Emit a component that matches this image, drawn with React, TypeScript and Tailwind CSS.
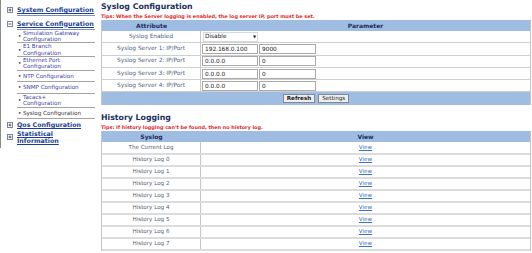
import React from 'react';

const FONT = "font-['DejaVu_Sans',Verdana,sans-serif]";

function Box({ open }: { open?: boolean }) {
  return (
    <span className="flex items-center justify-center w-[6px] h-[6px] border border-[#7d8896] bg-white shrink-0">
      <svg width="4" height="4" viewBox="0 0 4 4" className="block">
        <path d="M0.5 2h3" stroke="#2a3550" strokeWidth="0.8" />
        {!open && <path d="M2 0.5v3" stroke="#2a3550" strokeWidth="0.8" />}
      </svg>
    </span>
  );
}

function Heading({ label, open }: { label: React.ReactNode; open?: boolean }) {
  return (
    <div className="flex items-start gap-[4px] pl-[6px] pr-[3px]">
      <div className="flex pt-[3px]">
        <Box open={open} />
      </div>
      <div className="flex-1 border-b border-[#7f93b5] py-[2px] text-[6.3px] leading-[7px] font-bold text-[#1c3f94] underline">
        {label}
      </div>
    </div>
  );
}

const SUB: { l: React.ReactNode; sel?: boolean }[] = [
  { l: <>Simulation Gateway<br />Configuration</> },
  { l: <>E1 Branch<br />Configuration</> },
  { l: <>Ethernet Port<br />Configuration</> },
  { l: 'NTP Configuration' },
  { l: 'SNMP Configuration' },
  { l: <>Tacacs+<br />Configuration</> },
  { l: 'Syslog Configuration', sel: true },
];

function Sidebar() {
  return (
    <div className="w-[98px] shrink-0 border-l border-[#8c8c8c] pt-[4px] pb-[4px] self-start">
      <Heading label="System Configuration" />
      <div className="h-[1.5px]" />
      <Heading label="Service Configuration" open />
      <div className="pl-[16px] pr-[3px]">
        {SUB.map((s, i) => (
          <div
            key={i}
            className={`flex items-center min-h-[11.5px] border-b border-[#a3a3a3] py-[0.2px] text-[5.6px] leading-[6.2px] ${s.sel ? 'text-[#333333]' : 'text-[#3d3da6]'}`}
          >
            <span className="w-[6px] pl-[1px] text-[#333]">•</span>
            <span>{s.l}</span>
          </div>
        ))}
      </div>
      <div className="h-[2px]" />
      <div className="flex items-start gap-[4px] pl-[6px] pr-[3px]">
        <div className="flex pt-[1px]"><Box /></div>
        <div className="flex-1 text-[6.3px] leading-[7px] font-bold text-[#1c3f94] underline">Qos Configuration</div>
      </div>
      <div className="h-[1.5px]" />
      <div className="flex items-start gap-[4px] pl-[6px] pr-[3px]">
        <div className="flex pt-[4px]"><Box /></div>
        <div className="flex-1 text-[6.3px] leading-[7px] font-bold text-[#1c3f94] underline">
          Statistical<br />Information
        </div>
      </div>
    </div>
  );
}

function Input({ v, w }: { v: string; w: string }) {
  return (
    <div className={`${w} h-[10px] border border-[#a9a9a9] bg-white px-[2px] text-[5.8px] leading-[8px] text-[#222]`}>{v}</div>
  );
}

const SERVERS = [
  ['192.168.0.100', '9000'],
  ['0.0.0.0', '0'],
  ['0.0.0.0', '0'],
  ['0.0.0.0', '0'],
];

const LOGS = ['The Current Log', ...Array.from({ length: 8 }, (_, i) => `History Log ${i}`)];

export default function App() {
  return (
    <div className={`w-[532px] h-[253px] overflow-hidden bg-white flex gap-[3px] leading-none ${FONT}`}>
      <Sidebar />
      <main className="flex-1 pr-[1px]">
        <h1 className="text-[7.8px] leading-[12px] font-bold text-[#1b2f5e] pt-[1px]">Syslog Configuration</h1>
        <p className="text-[4.9px] leading-[6px] font-bold text-[#e3262c] h-[7px]">
          Tips: When the Server logging is enabled, the log server IP, port must be set.
        </p>
        <div className="border-x border-[#c6c6c6]">
          <div className="flex h-[11px] items-center bg-[#9fbde3] text-[6px] font-bold text-[#1b2f5e]">
            <div className="w-[99px] text-center">Attribute</div>
            <div className="flex-1 text-center">Parameter</div>
          </div>
          <div className="flex h-[12.3px] border-b border-[#cfcfcf] text-[5.8px]">
            <div className="w-[99px] border-r border-[#c6c6c6] flex items-center justify-center text-[#4f5f7d]">Syslog Enabled</div>
            <div className="flex-1 flex items-center pl-[2px]">
              <div className="w-[55px] h-[10px] border border-[#d8d8d8] flex items-center justify-between px-[1px] text-[#222]">
                <span>Disable</span>
                <span className="text-[4px]">▼</span>
              </div>
            </div>
          </div>
          {SERVERS.map(([ip, port], i) => (
            <div key={i} className="flex h-[12.3px] border-b border-[#cfcfcf] text-[5.8px]">
              <div className="w-[99px] border-r border-[#c6c6c6] flex items-center justify-center text-[#4f5f7d]">
                Syslog Server {i + 1}: IP/Port
              </div>
              <div className="flex-1 flex items-center gap-[1px] pl-[1px]">
                <Input v={ip} w="w-[56px]" />
                <Input v={port} w="w-[57px]" />
              </div>
            </div>
          ))}
          <div className="flex h-[13px] items-center justify-center gap-[3px] bg-[#9fbde3]">
            <button className="h-[9px] px-[3px] border border-[#7e8a99] bg-[#eeeeee] text-[5.6px] leading-[7px] text-[#222] font-bold">Refresh</button>
            <button className="h-[9px] px-[3px] border border-[#7e8a99] bg-[#eeeeee] text-[5.6px] leading-[7px] text-[#222]">Settings</button>
          </div>
        </div>

        <h2 className="text-[7.8px] leading-[12px] font-bold text-[#1b2f5e] pt-[7px]">History Logging</h2>
        <p className="text-[4.9px] leading-[6px] font-bold text-[#e3262c] h-[7px]">
          Tips: If history logging can't be found, then no history log.
        </p>
        <div className="border-x border-[#c6c6c6]">
          <div className="flex h-[11px] items-center bg-[#9fbde3] text-[6px] font-bold text-[#1b2f5e]">
            <div className="w-[99px] text-center">Syslog</div>
            <div className="flex-1 text-center">View</div>
          </div>
          {LOGS.map((l) => (
            <div key={l} className="flex h-[12.1px] border-b-2 border-[#dcdcdc] text-[5.6px]">
              <div className="w-[99px] border-r border-[#c6c6c6] flex items-center justify-center text-[#56606f]">{l}</div>
              <div className="flex-1 flex items-center justify-center">
                <a className="text-[#3a6fc4] underline">View</a>
              </div>
            </div>
          ))}
        </div>
      </main>
    </div>
  );
}
